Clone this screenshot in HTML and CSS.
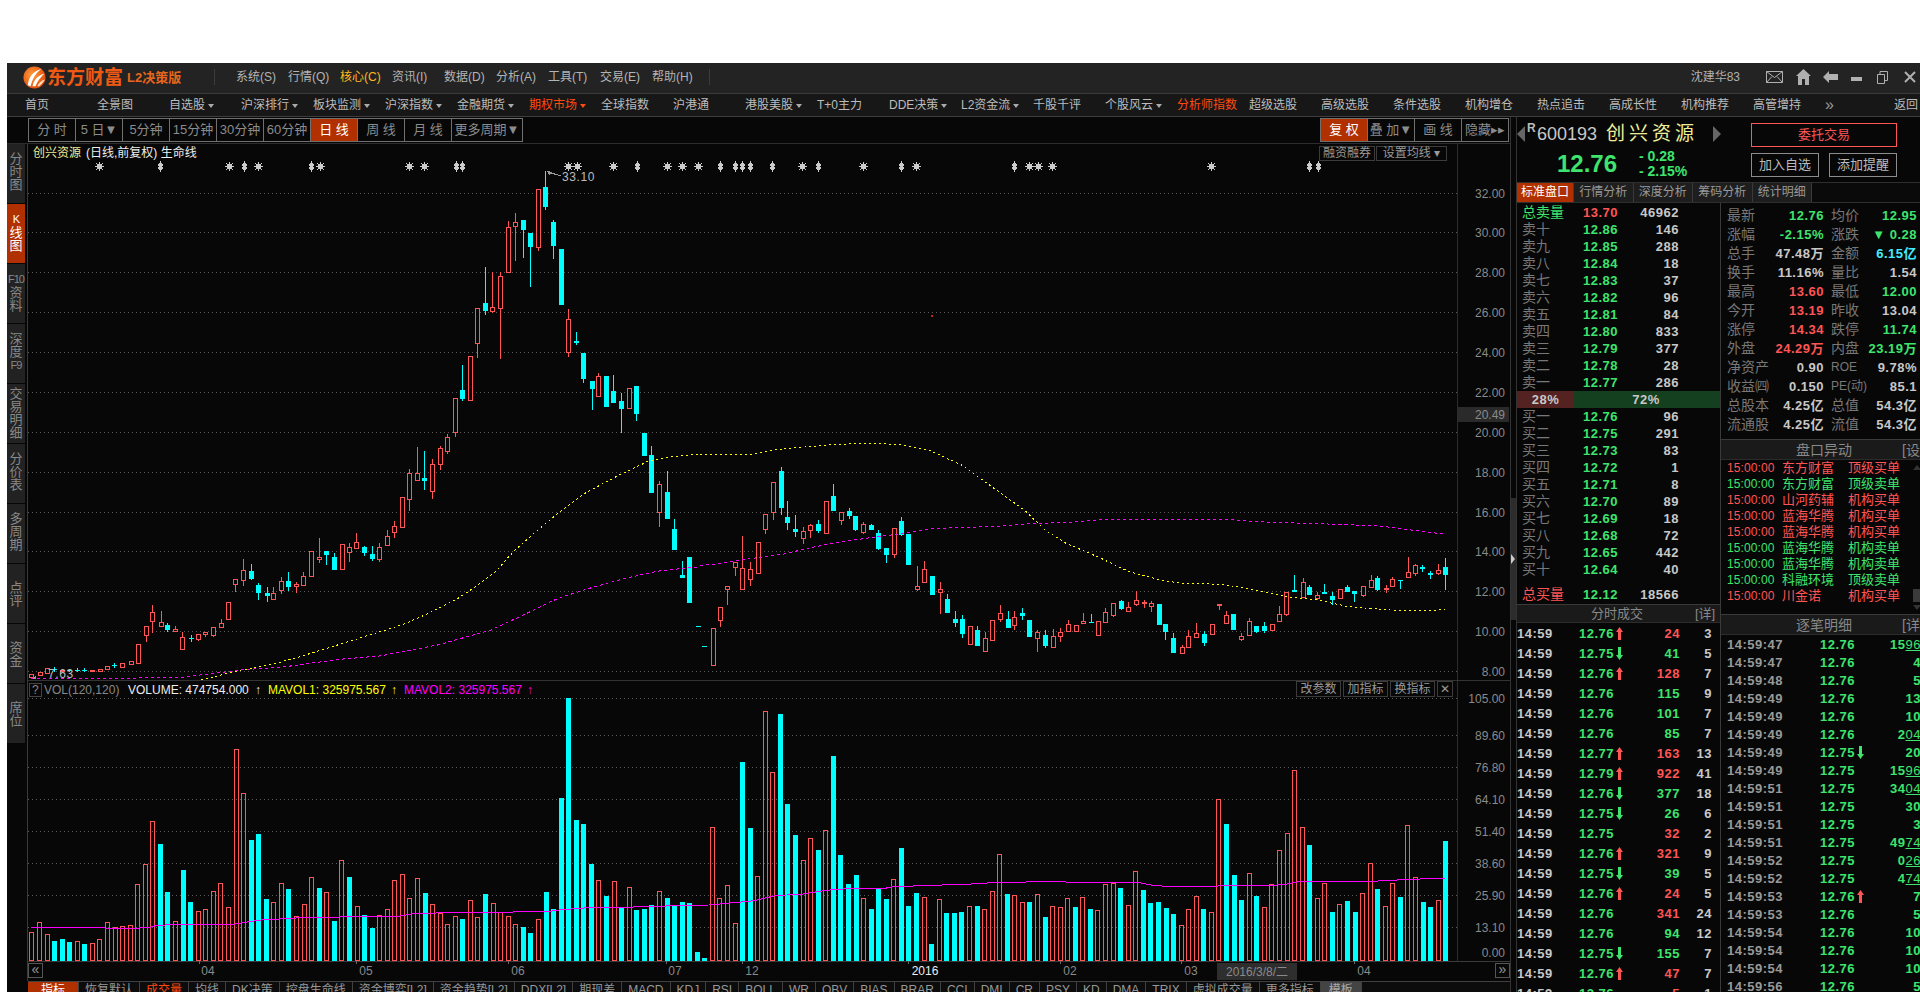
FILE: index.html
```html
<!DOCTYPE html>
<html lang="zh-CN">
<head>
<meta charset="utf-8">
<title>东方财富 L2决策版</title>
<link rel="stylesheet" href="styles.css">
</head>
<body>
<svg class="defs" aria-hidden="true">
  <symbol id="aup" viewBox="0 0 7 13"><path d="M3.5 0L7 5H5V13H2V5H0Z"/></symbol>
  <symbol id="adn" viewBox="0 0 7 13"><path d="M3.5 13L7 8H5V0H2V8H0Z"/></symbol>
</svg>
<div class="window">
  <header class="titlebar">
    <div class="logo">
      <svg class="logo-mark" viewBox="0 0 24 24">
        <defs><radialGradient id="lg" cx="40%" cy="40%" r="65%"><stop offset="0" stop-color="#ffa040"/><stop offset="1" stop-color="#e04a08"/></radialGradient></defs>
        <circle cx="12" cy="12" r="11.5" fill="url(#lg)"/>
        <path d="M5 20C6 11 11 5 19 3C14 7 10 12 8 21Z" fill="#fff"/>
        <path d="M10 21C11 15 15 10 22 8C18 12 15 16 13 21Z" fill="#fff"/>
        <path d="M15 21C16 18 19 15 23 14C21 17 19 19 17 21Z" fill="#ffe0c0"/>
      </svg>
      <span class="logo-name">东方财富</span>
      <span class="logo-ver">L2决策版</span>
    </div>
    <nav class="sysmenu">
      <span>系统(S)</span><span>行情(Q)</span><span class="hot">核心(C)</span><span>资讯(I)</span><span>数据(D)</span><span>分析(A)</span><span>工具(T)</span><span>交易(E)</span><span>帮助(H)</span>
    </nav>
    <div class="winctl">
      <span class="user">沈建华83</span>
      <svg class="wi wi-mail" viewBox="0 0 17 12"><path d="M.5.5H16.5V11.5H.5ZM.5.5L8.5 6.5L16.5.5M.5 11.5L6 5.5M16.5 11.5L11 5.5"/></svg>
      <svg class="wi wi-home" viewBox="0 0 15 16"><path class="f" d="M7.5 0L15 7H13V16H9V10H6V16H2V7H0Z"/></svg>
      <svg class="wi wi-back" viewBox="0 0 15 12"><path class="f" d="M0 6L6 0V3H15V9H6V12Z"/></svg>
      <svg class="wi wi-min" viewBox="0 0 11 4"><path class="f" d="M0 0H11V4H0Z"/></svg>
      <svg class="wi wi-max" viewBox="0 0 11 13"><path d="M.5 3.5H7.5V12.5H.5ZM3 3V.5H10.5V9.5H8"/></svg>
      <svg class="wi wi-close" viewBox="0 0 12 12"><path class="thick" d="M1 1L11 11M11 1L1 11"/></svg>
    </div>
  </header>
  <nav class="mainmenu">
    <span>首页</span><span>全景图</span><span class="dd">自选股</span><span class="dd">沪深排行</span><span class="dd">板块监测</span><span class="dd">沪深指数</span><span class="dd">金融期货</span><span class="dd hot">期权市场</span><span>全球指数</span><span>沪港通</span><span class="dd">港股美股</span><span>T+0主力</span><span class="dd">DDE决策</span><span class="dd">L2资金流</span><span>千股千评</span><span class="dd">个股风云</span><span class="hot">分析师指数</span><span>超级选股</span><span>高级选股</span><span>条件选股</span><span>机构增仓</span><span>热点追击</span><span>高成长性</span><span>机构推荐</span><span>高管增持</span><span class="more">»</span><span class="back">返回</span>
  </nav>
  <div class="main">
    <section class="chartpane">
      <div class="toolbar">
        <div class="btngroup">
          <span>分 时</span><span>5 日▼</span><span>5分钟</span><span>15分钟</span><span>30分钟</span><span>60分钟</span><span class="on">日 线</span><span>周 线</span><span>月 线</span><span class="wide">更多周期▼</span>
        </div>
        <div class="btngroup">
          <span class="on">复 权</span><span>叠 加▼</span><span>画 线</span><span>隐藏▸▸</span>
        </div>
      </div>
      <div class="chartbody">
        <aside class="rail">
          <span>分<br>时<br>图</span><span class="on"><small>K</small><br>线<br>图</span><span><small>F10</small><br>资<br>料</span><span>深<br>度<br><small>F9</small></span><span class="four">交<br>易<br>明<br>细</span><span>分<br>价<br>表</span><span>多<br>周<br>期</span><span class="two">点<br>评</span><span class="two">资<br>金</span><span class="two">席<br>位</span>
        </aside>
        <div class="chart">
          <svg id="chart" class="chart-svg" viewBox="27 144 1483 837"></svg>
          <div class="chart-btns top">
            <span>融资融券</span><span class="ma">设置均线 ▾</span>
          </div>
          <div class="chart-btns ind">
            <span>改参数</span><span>加指标</span><span>换指标</span><span class="x">✕</span>
          </div>
          <span class="pager prev">«</span>
          <span class="pager next">»</span>
        </div>
      </div>
      <div class="bottomtabs">
        <span class="on">指标</span><span>恢复默认</span><span class="hot">成交量</span><span>均线</span><span>DK决策</span><span>控盘生命线</span><span>资金博弈[L2]</span><span>资金趋势[L2]</span><span>DDX[L2]</span><span>期现差</span><span>MACD</span><span>KDJ</span><span>RSI</span><span>BOLL</span><span>WR</span><span>OBV</span><span>BIAS</span><span>BRAR</span><span>CCI</span><span>DMI</span><span>CR</span><span>PSY</span><span>KD</span><span>DMA</span><span>TRIX</span><span>虚拟成交量</span><span>更多指标</span><span class="tpl">模板</span>
      </div>
    </section>
    <div class="splitter"><div class="grip"></div></div>
    <section class="quote">
      <div class="qhead">
        <div class="qleft">
          <div class="qname">
            <i class="tri tri-l"></i><sup>R</sup><span class="code">600193</span><span class="name">创兴资源</span><i class="tri tri-r"></i>
          </div>
          <div class="qprice">
            <span class="last">12.76</span>
            <div class="chg"><span>- 0.28</span><span>- 2.15%</span></div>
          </div>
        </div>
        <div class="qbtns">
          <span class="trade">委托交易</span>
          <div class="pair"><span>加入自选</span><span>添加提醒</span></div>
        </div>
      </div>
      <div class="qtabs"><span class="on">标准盘口</span><span>行情分析</span><span>深度分析</span><span>筹码分析</span><span>统计明细</span></div>
      <div class="qbody">
        <div class="col1">
          <div class="book">
            <div class="lv"><span class="g">总卖量</span><b class="r">13.70</b><b>46962</b></div>
            <div class="lv"><span>卖十</span><b class="g">12.86</b><b>146</b></div>
            <div class="lv"><span>卖九</span><b class="g">12.85</b><b>288</b></div>
            <div class="lv"><span>卖八</span><b class="g">12.84</b><b>18</b></div>
            <div class="lv"><span>卖七</span><b class="g">12.83</b><b>37</b></div>
            <div class="lv"><span>卖六</span><b class="g">12.82</b><b>96</b></div>
            <div class="lv"><span>卖五</span><b class="g">12.81</b><b>84</b></div>
            <div class="lv"><span>卖四</span><b class="g">12.80</b><b>833</b></div>
            <div class="lv"><span>卖三</span><b class="g">12.79</b><b>377</b></div>
            <div class="lv"><span>卖二</span><b class="g">12.78</b><b>28</b></div>
            <div class="lv"><span>卖一</span><b class="g">12.77</b><b>286</b></div>
            <div class="ratio"><b class="ra">28%</b><b class="rb">72%</b></div>
            <div class="lv"><span>买一</span><b class="g">12.76</b><b>96</b></div>
            <div class="lv"><span>买二</span><b class="g">12.75</b><b>291</b></div>
            <div class="lv"><span>买三</span><b class="g">12.73</b><b>83</b></div>
            <div class="lv"><span>买四</span><b class="g">12.72</b><b>1</b></div>
            <div class="lv"><span>买五</span><b class="g">12.71</b><b>8</b></div>
            <div class="lv"><span>买六</span><b class="g">12.70</b><b>89</b></div>
            <div class="lv"><span>买七</span><b class="g">12.69</b><b>18</b></div>
            <div class="lv"><span>买八</span><b class="g">12.68</b><b>72</b></div>
            <div class="lv"><span>买九</span><b class="g">12.65</b><b>442</b></div>
            <div class="lv"><span>买十</span><b class="g">12.64</b><b>40</b></div>
            <div class="lv total"><span class="r">总买量</span><b class="g">12.12</b><b>18566</b></div>
          </div>
          <div class="phead"><span>分时成交</span><em>[详]</em></div>
          <div class="trades">
            <div class="tr"><b>14:59</b><b class="g">12.76<svg class="ar r"><use href="#aup"/></svg></b><b class="r">24</b><b>3</b></div>
            <div class="tr"><b>14:59</b><b class="g">12.75<svg class="ar g"><use href="#adn"/></svg></b><b class="g">41</b><b>5</b></div>
            <div class="tr"><b>14:59</b><b class="g">12.76<svg class="ar r"><use href="#aup"/></svg></b><b class="r">128</b><b>7</b></div>
            <div class="tr"><b>14:59</b><b class="g">12.76</b><b class="g">115</b><b>9</b></div>
            <div class="tr"><b>14:59</b><b class="g">12.76</b><b class="g">101</b><b>7</b></div>
            <div class="tr"><b>14:59</b><b class="g">12.76</b><b class="g">85</b><b>7</b></div>
            <div class="tr"><b>14:59</b><b class="g">12.77<svg class="ar r"><use href="#aup"/></svg></b><b class="r">163</b><b>13</b></div>
            <div class="tr"><b>14:59</b><b class="g">12.79<svg class="ar r"><use href="#aup"/></svg></b><b class="r">922</b><b>41</b></div>
            <div class="tr"><b>14:59</b><b class="g">12.76<svg class="ar g"><use href="#adn"/></svg></b><b class="g">377</b><b>18</b></div>
            <div class="tr"><b>14:59</b><b class="g">12.75<svg class="ar g"><use href="#adn"/></svg></b><b class="g">26</b><b>6</b></div>
            <div class="tr"><b>14:59</b><b class="g">12.75</b><b class="r">32</b><b>2</b></div>
            <div class="tr"><b>14:59</b><b class="g">12.76<svg class="ar r"><use href="#aup"/></svg></b><b class="r">321</b><b>9</b></div>
            <div class="tr"><b>14:59</b><b class="g">12.75<svg class="ar g"><use href="#adn"/></svg></b><b class="g">39</b><b>5</b></div>
            <div class="tr"><b>14:59</b><b class="g">12.76<svg class="ar r"><use href="#aup"/></svg></b><b class="r">24</b><b>5</b></div>
            <div class="tr"><b>14:59</b><b class="g">12.76</b><b class="r">341</b><b>24</b></div>
            <div class="tr"><b>14:59</b><b class="g">12.76</b><b class="g">94</b><b>12</b></div>
            <div class="tr"><b>14:59</b><b class="g">12.75<svg class="ar g"><use href="#adn"/></svg></b><b class="g">155</b><b>7</b></div>
            <div class="tr"><b>14:59</b><b class="g">12.76<svg class="ar r"><use href="#aup"/></svg></b><b class="r">47</b><b>7</b></div>
            <div class="tr"><b>14:59</b><b class="g">12.76</b><b class="r">5</b><b>1</b></div>
          </div>
        </div>
        <div class="col2">
          <div class="info">
            <div class="in"><span>最新</span><b class="g">12.76</b><span>均价</span><b class="g">12.95</b></div>
            <div class="in"><span>涨幅</span><b class="g">-2.15%</b><span>涨跌</span><b class="g">▼ 0.28</b></div>
            <div class="in"><span>总手</span><b>47.48万</b><span>金额</span><b class="c">6.15亿</b></div>
            <div class="in"><span>换手</span><b>11.16%</b><span>量比</span><b>1.54</b></div>
            <div class="in"><span>最高</span><b class="r">13.60</b><span>最低</span><b class="g">12.00</b></div>
            <div class="in"><span>今开</span><b class="r">13.19</b><span>昨收</span><b>13.04</b></div>
            <div class="in"><span>涨停</span><b class="r">14.34</b><span>跌停</span><b class="g">11.74</b></div>
            <div class="in"><span>外盘</span><b class="r">24.29万</b><span>内盘</span><b class="g">23.19万</b></div>
            <div class="in"><span>净资产</span><b>0.90</b><span class="sm">ROE</span><b>9.78%</b></div>
            <div class="in"><span>收益㈣</span><b>0.150</b><span class="sm">PE(动)</span><b>85.1</b></div>
            <div class="in"><span>总股本</span><b>4.25亿</b><span>总值</span><b>54.3亿</b></div>
            <div class="in"><span>流通股</span><b>4.25亿</b><span>流值</span><b>54.3亿</b></div>
          </div>
          <div class="phead wide"><span>盘口异动</span><em>[设</em></div>
          <div class="alerts">
            <div class="al r"><span>15:00:00</span><span>东方财富</span><span>顶级买单</span></div>
            <div class="al g"><span>15:00:00</span><span>东方财富</span><span>顶级卖单</span></div>
            <div class="al r"><span>15:00:00</span><span>山河药辅</span><span>机构买单</span></div>
            <div class="al r"><span>15:00:00</span><span>蓝海华腾</span><span>机构买单</span></div>
            <div class="al r"><span>15:00:00</span><span>蓝海华腾</span><span>机构买单</span></div>
            <div class="al g"><span>15:00:00</span><span>蓝海华腾</span><span>机构卖单</span></div>
            <div class="al g"><span>15:00:00</span><span>蓝海华腾</span><span>机构卖单</span></div>
            <div class="al g"><span>15:00:00</span><span>科融环境</span><span>顶级卖单</span></div>
            <div class="al r"><span>15:00:00</span><span>川金诺</span><span>机构买单</span></div>
            <div class="scroll"><i class="up"></i><i class="thumb"></i><i class="down"></i></div>
          </div>
          <div class="phead wide"><span>逐笔明细</span><em>[详</em></div>
          <div class="ticks">
            <div class="tk"><b>14:59:47</b><b class="g">12.76</b><b class="g">15<u>96</u></b></div>
            <div class="tk"><b>14:59:47</b><b class="g">12.76</b><b class="g">4</b></div>
            <div class="tk"><b>14:59:48</b><b class="g">12.76</b><b class="g">5</b></div>
            <div class="tk"><b>14:59:49</b><b class="g">12.76</b><b class="g">13</b></div>
            <div class="tk"><b>14:59:49</b><b class="g">12.76</b><b class="g">10</b></div>
            <div class="tk"><b>14:59:49</b><b class="g">12.76</b><b class="g">2<u>04</u></b></div>
            <div class="tk"><b>14:59:49</b><b class="g">12.75<svg class="ar g"><use href="#adn"/></svg></b><b class="g">20</b></div>
            <div class="tk"><b>14:59:49</b><b class="g">12.75</b><b class="g">15<u>96</u></b></div>
            <div class="tk"><b>14:59:51</b><b class="g">12.75</b><b class="g">34<u>04</u></b></div>
            <div class="tk"><b>14:59:51</b><b class="g">12.75</b><b class="g">30</b></div>
            <div class="tk"><b>14:59:51</b><b class="g">12.75</b><b class="g">3</b></div>
            <div class="tk"><b>14:59:51</b><b class="g">12.75</b><b class="g">49<u>74</u></b></div>
            <div class="tk"><b>14:59:52</b><b class="g">12.75</b><b class="g">0<u>26</u></b></div>
            <div class="tk"><b>14:59:52</b><b class="g">12.75</b><b class="g">4<u>74</u></b></div>
            <div class="tk"><b>14:59:53</b><b class="g">12.76<svg class="ar r"><use href="#aup"/></svg></b><b class="g">7</b></div>
            <div class="tk"><b>14:59:53</b><b class="g">12.76</b><b class="g">5</b></div>
            <div class="tk"><b>14:59:54</b><b class="g">12.76</b><b class="g">10</b></div>
            <div class="tk"><b>14:59:54</b><b class="g">12.76</b><b class="g">10</b></div>
            <div class="tk"><b>14:59:54</b><b class="g">12.76</b><b class="g">10</b></div>
            <div class="tk"><b>14:59:56</b><b class="g">12.76</b><b class="g">5</b></div>
          </div>
        </div>
      </div>
    </section>
  </div>
</div>
<script src="chart.js"></script>
</body>
</html>
```
FILE: styles.css
```css
* { box-sizing: border-box; }
html, body { margin: 0; height: 100%; background: #fff; overflow: hidden; }
body { padding: 63px 0 0 7px; font: 12px/1 "Liberation Sans", "Noto Sans CJK SC", sans-serif; color: #aaa; }
.defs { width: 0; height: 0; position: absolute; }
b { font-weight: 700; }
em { font-style: normal; }

.window { width: 1913px; height: 929px; background: #070707; overflow: hidden; display: flex; flex-direction: column; }

.titlebar { flex: none; height: 31px; background: #232323; border-bottom: 1px solid #3a3a3a; display: flex; align-items: center; padding: 0 4px 2px 16px; }
.logo { display: flex; align-items: center; width: 192px; border-right: 1px solid #3c3c3c; height: 16px; }
.logo-mark { width: 23px; height: 23px; flex: none; }
.logo-name { font-size: 19px; font-weight: 700; color: #ee5a14; margin-left: 1px; width: 80px; white-space: nowrap; }
.logo-ver { font-size: 13px; font-weight: 700; color: #e8661c; white-space: nowrap; }
.sysmenu { display: flex; padding-left: 21px; width: 495px; height: 16px; align-items: center; border-right: 1px solid #3c3c3c; }
.sysmenu span { width: 52px; flex: none; color: #b4b4b4; white-space: nowrap; font-size: 12px; }
.sysmenu .hot { color: #ffb81e; }
.winctl { margin-left: auto; display: flex; align-items: center; }
.user { color: #b0b0b0; margin-right: 26px; white-space: nowrap; }
.wi { fill: none; stroke: #b0b0b0; stroke-width: 1; display: block; }
.wi .f { fill: #b0b0b0; stroke: none; }
.wi .thick { stroke-width: 2; }
.wi-mail { width: 17px; height: 12px; margin-right: 13px; }
.wi-home { width: 15px; height: 16px; margin-right: 12px; }
.wi-back { width: 15px; height: 12px; margin-right: 13px; }
.wi-min { width: 11px; height: 4px; margin-right: 15px; margin-top: 3px; }
.wi-max { width: 11px; height: 13px; margin-right: 16px; }
.wi-close { width: 12px; height: 12px; }

.mainmenu { flex: none; height: 23px; background: #171717; border-bottom: 1px solid #3e3e3e; display: flex; align-items: center; padding-left: 18px; }
.mainmenu span { flex: none; width: 72px; color: #bcbcbc; white-space: nowrap; }
.mainmenu .hot { color: #ff4a10; }
.mainmenu .dd::after { content: ""; display: inline-block; border: 3px solid transparent; border-top: 4px solid #aaa; margin-left: 3px; vertical-align: -2px; }
.mainmenu .hot.dd::after { border-top-color: #ff4a10; }
.mainmenu .more { font-size: 16px; width: 69px; color: #999; }
.mainmenu .back { width: 28px; }

.main { flex: 1; min-height: 0; display: flex; }

.chartpane { flex: none; width: 1503px; display: flex; flex-direction: column; }
.toolbar { flex: none; height: 27px; border-bottom: 1px solid #2c2c2c; display: flex; justify-content: space-between; padding: 1px 1px 0 21px; }
.btngroup { display: flex; height: 24px; border: 1px solid #707070; border-right: 0; }
.btngroup span { width: 47px; flex: none; border-right: 1px solid #707070; color: #8c8c8c; font-size: 13px; line-height: 22px; text-align: center; white-space: nowrap; }
.btngroup .wide { width: 71px; }
.btngroup .on { background: #b03000; color: #fff; }

.chartbody { flex: none; height: 837px; display: flex; }
.rail { flex: none; width: 20px; display: flex; flex-direction: column; gap: 1px; }
.rail span { flex: none; width: 18px; height: 59px; background: #222; color: #888; font-size: 13px; line-height: 13px; text-align: center; padding-top: 8px; white-space: nowrap; }
.rail small { font-size: 11px; letter-spacing: -1px; display: inline-block; max-width: 18px; }
.rail .four { padding-top: 3px; }
.rail .two { padding-top: 17px; }
.rail .on { background: #b03000; color: #fff; }
.chart { flex: none; width: 1483px; height: 837px; position: relative; overflow: hidden; }
.chart-svg { display: block; width: 1483px; height: 837px; shape-rendering: crispEdges; }
.chart-svg text { font: 12px "Liberation Sans", "Noto Sans CJK SC", sans-serif; dominant-baseline: central; shape-rendering: auto; }
.chart-svg .lab { fill: #8a8a8a; text-anchor: end; }
.chart-svg .mon { fill: #8a8a8a; text-anchor: middle; }
.chart-svg .mon.y { fill: #eee; }
.chart-svg .wh { fill: #eee; }
.chart-svg .ye { fill: #ffff00; }
.chart-svg .ma { fill: #ff00ff; }
.chart-svg .gy { fill: #888; }
.chart-svg .ttl { fill: #eeee99; }
.chart-svg .pk { fill: #bbb; letter-spacing: .6px; }

.chart-btns { position: absolute; display: flex; gap: 2px; }
.chart-btns span { border: 1px solid #3c3c3c; color: #999; white-space: nowrap; text-align: center; }
.chart-btns.top { left: 1292px; top: 2px; gap: 1px; }
.chart-btns.top span { width: 56px; height: 15px; line-height: 13px; }
.chart-btns.top .ma { width: 71px; }
.chart-btns.ind { left: 1269px; top: 537px; }
.chart-btns.ind span { width: 45px; height: 16px; line-height: 14px; }
.chart-btns.ind .x { width: 16px; }
.pager { position: absolute; width: 15px; height: 15px; border: 1px solid #555; color: #999; text-align: center; font-size: 14px; line-height: 11px; background: #070707; }
.pager.prev { left: 1px; top: 819px; }
.pager.next { left: 1468px; top: 819px; }

.bottomtabs { flex: none; display: flex; margin-left: 21px; width: 1482px; border-top: 1px solid #404040; height: 20px; background: #0c0c0c; }
.bottomtabs span { flex: none; padding: 1px 6px 0; border-right: 1px solid #404040; color: #999; line-height: 14px; white-space: nowrap; }
.bottomtabs .on { background: #b03000; color: #fff; padding: 1px 13px 0; }
.bottomtabs .hot { color: #ff4a10; }
.bottomtabs .tpl { background: #444; padding: 1px 8px 0; color: #aaa; }

.splitter { flex: none; width: 7px; border-left: 1px solid #333; border-right: 1px solid #333; }
.grip { margin-top: 381px; height: 122px; background: #2c2c2c; display: flex; align-items: center; }
.grip::after { content: ""; border: 5px solid transparent; border-left: 4px solid #ccc; }

.quote { flex: none; width: 403px; display: flex; flex-direction: column; min-height: 0; }
.qhead { flex: none; height: 66px; display: flex; border-bottom: 1px solid #2e2e2e; }
.qleft { width: 234px; flex: none; }
.qname { display: flex; align-items: center; height: 32px; padding-top: 1px; }
.tri { display: block; border: 8px solid transparent; }
.tri-l { border-right: 8px solid #666; border-left: 0; }
.tri-r { border-left: 8px solid #666; border-right: 0; margin-left: 16px; }
.qname sup { font-size: 12px; font-weight: 700; color: #bbb; margin: -12px 1px 0 2px; width: 9px; }
.code { font-size: 18px; color: #c8c8c8; width: 69px; }
.name { font-size: 19px; color: #eeee99; letter-spacing: 4px; white-space: nowrap; width: 91px; }
.qprice { display: flex; align-items: center; padding-left: 40px; }
.last { font-size: 24px; font-weight: 700; color: #3ee46e; width: 82px; }
.chg { display: flex; flex-direction: column; font-size: 14px; font-weight: 700; color: #3ee46e; line-height: 15px; }
.qbtns { padding-top: 6px; width: 146px; }
.qbtns span { display: block; color: #bbb; border: 1px solid #8c8c8c; text-align: center; white-space: nowrap; font-size: 13px; }
.qbtns .trade { height: 24px; line-height: 22px; border-color: #ff5555; color: #ff5555; margin-bottom: 6px; }
.pair { display: flex; justify-content: space-between; }
.pair span { width: 68px; height: 24px; line-height: 22px; }

.qtabs { flex: none; height: 20px; display: flex; background: #0a0a0a; border-bottom: 1px solid #2e2e2e; }
.qtabs span { width: 59.5px; background: #1e1e1e; border-right: 1px solid #3a3a3a; color: #999; text-align: center; line-height: 18px; white-space: nowrap; }
.qtabs .on { width: 57px; background: #b03000; color: #fff; }

.qbody { flex: 1; min-height: 0; display: flex; }
.g { color: #3ee46e; fill: #3ee46e; }
.r { color: #ff5555; fill: #ff5555; }
.c { color: #44eeff; }
.col1 { flex: none; width: 204px; border-right: 1px solid #3a3a3a; }
.col2 { flex: none; width: 199px; }

.book { height: 401px; padding-top: 1px; display: flex; flex-direction: column; }
.lv { flex: none; height: 17px; display: grid; grid-template-columns: 61px 50px 46px; padding-left: 5px; align-items: center; white-space: nowrap; }
.lv span { font-size: 14px; color: #787878; line-height: 17px; }
.lv span.g { color: #3ee46e; }
.lv span.r { color: #ff5555; }
.lv b, .tr b, .tk b, .in b { font-size: 13px; letter-spacing: .5px; color: #c8c8c8; }
.lv b.g, .tr b.g, .tk b.g, .in b.g { color: #3ee46e; }
.lv b.r, .tr b.r, .in b.r { color: #ff5555; }
.in b.c { color: #44eeff; }
.lv b:last-child { text-align: right; }
.ratio { flex: none; height: 17px; display: flex; line-height: 17px; font-size: 13px; text-align: center; }
.ratio b { color: #c8c8c8; letter-spacing: .5px; }
.ra { width: 57px; background: #552222; }
.rb { flex: 1; background: #144020; padding-right: 2px; }
.total { margin-top: 8px; }

.phead { height: 19px; background: #1a1a1a; border-top: 1px solid #3a3a3a; border-bottom: 1px solid #2c2c2c; display: flex; align-items: center; color: #888; font-size: 13px; white-space: nowrap; padding-left: 74px; }
.phead span { width: 104px; flex: none; }
.phead em { flex: none; }
.phead.wide { height: 21px; padding-left: 75px; font-size: 14px; }
.phead.wide span { width: 106px; }

.trades { display: flex; flex-direction: column; }
.tr { flex: none; height: 20px; display: grid; grid-template-columns: 62px 48px 53px 32px; align-items: center; white-space: nowrap; }
.tr b:nth-child(3), .tr b:nth-child(4) { text-align: right; }
.ar { width: 7px; height: 13px; vertical-align: -2px; margin-left: 2px; }

.info { height: 236px; padding-top: 3px; }
.in { height: 19px; display: grid; grid-template-columns: 40px 57px 36px 57px; column-gap: 0; padding-left: 6px; align-items: center; white-space: nowrap; }
.in span { font-size: 14px; color: #787878; line-height: 19px; }
.in span:nth-child(3) { margin-left: 7px; }
.in span.sm { font-size: 12px; }
.in b { text-align: right; }
.in b:last-child { margin-left: -7px; width: 64px; }

.alerts { height: 154px; position: relative; }
.al { height: 16px; display: grid; grid-template-columns: 55px 66px auto; padding-left: 6px; align-items: center; white-space: nowrap; color: inherit; }
.al span:first-child { font-size: 12px; letter-spacing: .1px; }
.al span { font-size: 13px; line-height: 16px; }
.al.r { color: #ff5555; }
.al.g { color: #3ee46e; }
.scroll { position: absolute; right: 0; top: 0; bottom: 0; width: 7px; display: flex; flex-direction: column; align-items: center; }
.scroll .up { border: 4px solid transparent; border-bottom: 5px solid #333; margin-top: 1px; }
.scroll .thumb { width: 7px; height: 13px; margin-top: auto; background: #3a3a3a; }
.scroll .down { border: 4px solid transparent; border-top: 5px solid #333; margin-top: 3px; }

.ticks { display: flex; flex-direction: column; }
.tk { flex: none; height: 18px; display: grid; grid-template-columns: 93px 60px 41px; padding-left: 6px; align-items: center; white-space: nowrap; }
.tk b:first-child { color: #999; }
.tk b:last-child { text-align: right; }
.tk u { font-weight: 400; }
```
FILE: chart.js
```javascript
(function () {
  var svg = document.getElementById('chart');
  var R = '#ff5555', C = '#00ffff';
  var o = [];

  function z7(x, y) { return [x / 2.45, 660 + y / 3]; }
  function z10(x, y) { return [x / 2.24, 250 + y / 3]; }
  function z11(x, y) { return [700 + x / 1.912, 400 + y / 3]; }
  function z12(x, y) { return [440 + x / 3, 165 + y / 3]; }

  function line(x1, y1, x2, y2, c, extra) {
    o.push('<line x1="' + x1 + '" y1="' + y1 + '" x2="' + x2 + '" y2="' + y2 + '" stroke="' + c + '"' + (extra || '') + '/>');
  }
  function text(cls, x, y, s) {
    o.push('<text class="' + cls + '" x="' + x + '" y="' + y + '">' + s + '</text>');
  }
  function px(x, y, w, h, c) {
    return '<rect x="' + x + '" y="' + y + '" width="' + w + '" height="' + h + '" fill="' + c + '"/>';
  }

  /* frame */
  line(27.5, 144, 27.5, 981, '#3a3a3a');
  line(1457.5, 144, 1457.5, 962, '#2c2c2c');
  line(28, 680.5, 1510, 680.5, '#333');
  line(28, 961.5, 1510, 961.5, '#3a3a3a');

  /* grid */
  var dots = ' stroke-dasharray="1 3"';
  [[193, '32.00'], [232, '30.00'], [272, '28.00'], [312, '26.00'], [352, '24.00'], [392, '22.00'], [432, '20.00'], [472, '18.00'], [512, '16.00'], [551, '14.00'], [591, '12.00'], [631, '10.00'], [671, '8.00']].forEach(function (p) {
    line(28, p[0] + 0.5, 1460, p[0] + 0.5, '#5a5a5a', dots);
    text('lab', 1505, p[0] + 0.5, p[1]);
  });
  [[698, '105.00'], [735, '89.60'], [767, '76.80'], [799, '64.10'], [831, '51.40'], [863, '38.60'], [895, '25.90'], [927, '13.10']].forEach(function (p) {
    line(28, p[0] + 0.5, 1460, p[0] + 0.5, '#5a5a5a', dots);
    text('lab', 1505, p[0] + 0.5, p[1]);
  });
  text('lab', 1505, 953, '0.00');
  o.push(px(1458, 407, 51, 15, '#2a2a2a'));
  text('lab', 1505, 414.5, '20.49');

  /* header */
  text('ttl', 33, 153, '创兴资源');
  text('wh', 86, 153, '(日线,前复权) 生命线');

  /* signal marks */
  var stars = [99, 229, 258, 320, 409, 424, 568, 577, 613, 667, 682, 698, 802, 863, 916, 1029, 1038, 1052, 1211];
  var diamonds = [160, 244, 311, 456, 462, 637, 720, 735, 742, 750, 772, 818, 901, 1014, 1309, 1318];
  stars.forEach(function (x) {
    o.push(px(x - 2, 164, 5, 5, '#ccc'));
    o.push(px(x, 162, 1, 9, '#ccc'));
    o.push(px(x - 4, 166, 9, 1, '#ccc'));
    o.push(px(x - 3, 163, 1, 1, '#ccc'));
    o.push(px(x + 3, 163, 1, 1, '#ccc'));
    o.push(px(x - 3, 169, 1, 1, '#ccc'));
    o.push(px(x + 3, 169, 1, 1, '#ccc'));
  });
  diamonds.forEach(function (x) {
    o.push(px(x, 161, 1, 11, '#ccc'));
    o.push(px(x - 1, 163, 3, 7, '#ccc'));
    o.push(px(x - 2, 164, 5, 2, '#ccc'));
    o.push(px(x - 2, 167, 5, 2, '#ccc'));
  });

  /* moving averages */
  function poly(pts, fn, c, dash) {
    var d = pts.map(function (p) { return fn(p[0], p[1]).join(','); }).join(' ');
    return '<polyline points="' + d + '" fill="none" stroke="' + c + '" stroke-dasharray="' + dash + '"/>';
  }
  var yellowA = [[450, 1290], [540, 1260], [600, 1246], [660, 1225], [720, 1200], [780, 1175], [840, 1150], [900, 1125], [960, 1090], [1020, 1050], [1060, 1015], [1110, 965], [1150, 905], [1200, 845], [1250, 790], [1310, 730], [1380, 680], [1450, 635], [1500, 620], [1568, 613]];
  var yellowB = [[0, 165], [100, 163], [150, 148], [200, 141], [260, 133], [320, 130], [380, 133], [440, 152], [500, 195], [540, 240], [580, 285], [620, 330], [660, 390], [700, 430], [760, 470], [820, 515], [880, 540], [920, 550], [1000, 553], [1060, 570], [1120, 590], [1180, 600], [1240, 620], [1320, 630], [1400, 632], [1425, 628]];
  var magA = [[70, 1285], [230, 1285], [400, 1283], [540, 1260], [640, 1250], [760, 1228], [850, 1218], [980, 1185], [1060, 1155], [1100, 1140], [1180, 1090], [1250, 1045], [1320, 1015], [1400, 985], [1480, 962], [1568, 950]];
  var magB = [[0, 497], [40, 490], [100, 475], [160, 462], [220, 440], [280, 423], [340, 410], [400, 398], [440, 387], [500, 382], [560, 380], [640, 370], [700, 368], [760, 360], [820, 357], [1000, 358], [1080, 366], [1200, 372], [1300, 378], [1360, 390], [1425, 403]];

  /* candles */
  var P = 'R', Q = 'C';
  var candles = [];
  function add(fn, list) { list.forEach(function (c) { candles.push([fn, c]); }); }
  add(z7, [[77, P, 42, 50], [97, P, 36, 46], [114, P, 24, 38], [133, Q, 27, 28, 20, 36], [153, P, 29, 33], [170, Q, 30, 31, 26, 35], [189, Q, 30, 31, 25, 35], [207, Q, 29, 30, 24, 35], [226, P, 29, 33], [244, P, 28, 32], [263, P, 18, 27], [280, Q, 15, 16, 9, 24], [300, P, 10, 20], [320, P, 3, 13], [337, P, 0, 8]]);
  add(z10, [[308, P, 1183, 1238], [326, P, 1129, 1154, 0, 1176], [341, P, 1087, 1112, 1065, 1150], [360, P, 1115, 1127, 1083, 0], [375, Q, 1125, 1140, 1120, 1145], [393, P, 1137, 1143, 1128, 0], [408, P, 1162, 1196, 1145, 0], [427, Q, 1164, 1166, 1155, 1175], [444, P, 1153, 1166, 0, 1172], [460, P, 1147, 1152, 0, 1160], [478, P, 1130, 1154, 0, 1160], [494, P, 1120, 1130, 1107, 0], [511, P, 1057, 1108], [527, P, 988, 1003, 0, 1025], [545, P, 961, 991, 927, 1007], [563, Q, 964, 987, 942, 990], [579, Q, 1005, 1028, 1000, 1050], [597, Q, 1030, 1037, 1010, 1056], [612, P, 1030, 1046, 1010, 0], [630, P, 994, 1021, 981, 1032], [646, Q, 994, 1011, 966, 1023], [664, P, 1003, 1009, 995, 1028], [679, P, 979, 1004, 966, 0], [697, P, 904, 977], [715, P, 921, 926, 864, 938], [731, Q, 903, 915, 0, 945], [749, Q, 921, 960, 908, 0], [765, P, 883, 956], [782, P, 892, 905, 880, 935], [798, P, 877, 893, 850, 897], [816, Q, 892, 909, 888, 917], [834, Q, 912, 927, 888, 933], [850, P, 892, 926, 880, 935], [867, P, 859, 884, 840, 0], [883, P, 829, 845, 813, 863], [901, P, 742, 830], [917, P, 670, 746, 657, 783], [935, P, 670, 689, 591, 0], [950, Q, 684, 693, 603, 720], [968, P, 643, 722, 628, 746], [986, P, 595, 641, 588, 660], [1002, P, 562, 602, 552, 611], [1020, P, 445, 545, 0, 560], [1036, Q, 420, 447, 345, 453], [1053, P, 319, 449], [1069, P, 175, 280, 0, 323], [1087, Q, 159, 183, 52, 195], [1103, P, 172, 183, 65, 189], [1121, P, 79, 173, 65, 327]]);
  add(z12, [[205, P, 187, 321, 168, 0], [226, P, 172, 183, 144, 288], [250, Q, 165, 195, 0, 278], [271, Q, 204, 246, 0, 365], [295, P, 72, 245, 0, 258], [316, Q, 66, 126, 18, 135], [340, Q, 171, 243, 165, 282], [364, Q, 252, 420]]);
  add(z10, [[1273, P, 208, 307, 178, 320], [1291, Q, 274, 278, 245, 285], [1307, Q, 309, 387, 0, 398], [1325, Q, 393, 417, 0, 480], [1340, P, 378, 437, 370, 0], [1358, Q, 378, 470], [1374, Q, 423, 458, 375, 0], [1392, Q, 453, 477, 430, 548], [1410, P, 414, 473], [1425, Q, 408, 491, 0, 513], [1443, Q, 549, 618], [1459, Q, 616, 729, 588, 0], [1477, P, 703, 785, 693, 830], [1493, Q, 726, 807, 663, 0], [1510, Q, 837, 900, 807, 0], [1528, Q, 975, 983, 933, 0], [1544, Q, 921, 1058], [1563, Q, 1129, 1130]]);
  add(z11, [[8, Q, 739, 740], [24, P, 685, 794], [38, P, 622, 660, 0, 680], [52, P, 557, 566, 0, 615], [66, P, 487, 500, 0, 528], [81, P, 505, 566, 408, 0], [96, P, 508, 536, 487, 558], [110, P, 427, 518, 0, 520], [125, P, 343, 388, 0, 402], [139, P, 247, 335, 0, 360], [154, Q, 213, 323, 202, 345], [167, Q, 351, 368, 303, 390], [182, Q, 387, 396, 346, 410], [196, P, 394, 415, 382, 432], [211, P, 376, 390, 372, 413], [226, Q, 372, 394, 360, 400], [240, P, 304, 398], [255, Q, 289, 332, 252, 0], [269, P, 337, 361, 0, 375], [284, Q, 334, 347, 325, 357], [297, Q, 348, 390, 0, 393], [312, P, 372, 397, 367, 401], [327, Q, 376, 390, 372, 0], [341, Q, 400, 446, 390, 449], [356, Q, 445, 464, 0, 488], [370, P, 385, 463, 0, 475], [385, Q, 364, 405, 351, 407], [398, Q, 401, 494], [414, P, 557, 568, 498, 573], [428, P, 508, 547, 484, 0], [443, Q, 528, 584], [458, P, 568, 575, 546, 641], [472, Q, 597, 638, 582, 0], [487, Q, 657, 668, 633, 680], [500, Q, 657, 701, 645, 714], [516, P, 679, 731], [529, Q, 691, 737, 677, 0], [544, P, 715, 754, 695, 0], [559, P, 659, 721], [573, P, 638, 656, 615, 665], [588, Q, 657, 683, 632, 685], [601, P, 652, 674, 633, 690], [616, Q, 640, 648, 625, 660], [630, Q, 660, 710], [645, P, 697, 715, 690, 755], [659, Q, 706, 737, 690, 745], [674, P, 709, 742, 688, 0], [689, P, 695, 707, 685, 725], [703, P, 673, 693, 660, 697], [718, P, 676, 692, 0, 697], [732, P, 664, 670, 640, 0], [747, Q, 667, 668, 642, 670], [761, P, 664, 705, 0, 707], [775, P, 637, 665, 625, 0], [789, P, 610, 644, 0, 650], [804, Q, 604, 627, 600, 630], [819, P, 622, 632, 607, 0], [833, P, 601, 611, 573, 617], [848, P, 606, 610, 600, 623], [862, P, 610, 617, 603, 636], [877, Q, 613, 674], [890, Q, 672, 697, 0, 720], [905, Q, 714, 758, 700, 0], [921, P, 741, 759, 735, 0], [934, P, 709, 740, 690, 0], [949, P, 699, 710, 670, 0], [963, Q, 702, 729, 693, 737], [978, P, 673, 703], [992, P, 613, 614, 613, 630], [1006, P, 646, 668, 632, 0], [1020, Q, 643, 689], [1035, P, 708, 717, 700, 722], [1050, P, 664, 705, 655, 708], [1064, Q, 678, 696, 0, 700], [1079, Q, 678, 694, 665, 698], [1093, P, 673, 690, 0, 693], [1108, P, 643, 662, 618, 665], [1121, P, 577, 641, 0, 648], [1136, Q, 571, 577, 525, 0], [1152, P, 545, 590, 535, 593], [1165, Q, 562, 585, 555, 0], [1180, P, 584, 594, 575, 600], [1194, Q, 576, 581, 552, 0], [1209, Q, 588, 600, 575, 614], [1223, P, 568, 593], [1238, Q, 562, 576, 555, 0], [1251, Q, 573, 581, 0, 605], [1267, P, 559, 584, 0, 590], [1282, P, 541, 561, 525, 565], [1295, Q, 535, 570, 528, 572], [1311, P, 565, 566, 555, 580], [1324, P, 538, 558, 532, 561], [1339, Q, 541, 542, 0, 567], [1353, P, 517, 530, 472, 0], [1368, P, 495, 518, 491, 527], [1381, Q, 500, 507, 494, 517], [1396, Q, 519, 524, 514, 536], [1412, P, 511, 520, 492, 524], [1425, Q, 502, 525, 474, 570]]);

  candles.forEach(function (e) {
    var fn = e[0], c = e[1];
    var p = fn(c[0], c[2]);
    var x = Math.round(p[0]);
    var top = Math.round(p[1]);
    var bot = Math.round(fn(c[0], c[3])[1]);
    var col = c[1] === P ? R : C;
    if (c[4]) line(x + 0.5, Math.round(fn(c[0], c[4])[1]), x + 0.5, top, col);
    if (c[5]) line(x + 0.5, bot, x + 0.5, Math.round(fn(c[0], c[5])[1]), col);
    if (c[1] === P) {
      o.push('<rect x="' + (x - 1.5) + '" y="' + (top + 0.5) + '" width="4" height="' + Math.max(1, bot - top) + '" fill="#070707" stroke="' + R + '"/>');
    } else {
      o.push(px(x - 2, top, 5, Math.max(1, bot - top), C));
    }
  });

  o.push(poly(yellowA, z10, '#ffff00', '2 3'));
  o.push(poly(yellowB, z11, '#ffff00', '2 3'));
  o.push(poly(magA, z10, '#ff00ff', '3 3'));
  o.push(poly(magB, z11, '#ff00ff', '3 3'));

  /* peak and low labels */
  line(548, 172, 561, 176, '#999');
  o.push('<path d="M547 171L552 172L549 175Z" fill="#999"/>');
  text('pk', 562, 177, '33.10');
  o.push('<path d="M32 679L36 675V679Z" fill="#999"/>');
  text('pk', 48, 674, '7.63');
  o.push(px(931, 315, 2, 2, '#c02020'));

  /* indicator legend */
  o.push('<rect x="29.5" y="683.5" width="12" height="13" fill="none" stroke="#444"/>');
  text('gy', 32, 690, '?');
  text('gy', 44, 689.5, 'VOL(120,120)');
  text('wh', 128, 689.5, 'VOLUME: 474754.000');
  text('wh', 255, 689.5, '↑');
  text('ye', 268, 689.5, 'MAVOL1: 325975.567');
  text('ye', 391, 689.5, '↑');
  text('ma', 404, 689.5, 'MAVOL2: 325975.567');
  text('ma', 527, 689.5, '↑');

  /* volume */
  var v = 'R817 R787 R823 C843 C837 C846 R844 C852 R850 R838 R787 R801 R799 R796 R673 R612 R484 C552 C696 R784 C630 C726 R754 R748 R694 R670 R742 R268 R400 C540 C522 C717 R727 R670 C687 R769 R733 R652 C684 R697 C783 R601 C651 R739 C765 C804 R766 R748 R661 R643 R715 R655 C699 R733 R758 R793 R769 C777 R721 R772 C702 R730 R757 R769 R793 C801 C819 R778 C696 C747 C414 C114 C480 C492 C612 R661 C708 R664 C742 R682 C750 ' +
    'C747 C735 R694 C714 C738 C726 C729 C876 C894 R502 R715 R676 R790 C306 C504 R649 R154 R337 C162 C432 C525 R601 R535 C570 R511 C288 C585 C672 C645 R715 C747 C683 C717 R658 C564 C738 C699 R712 C852 R718 C759 C759 C756 R739 C738 R748 R694 R583 C702 R706 R727 C726 R703 C771 R739 R742 R715 C741 R712 C747 R751 R673 R668 C684 R736 R634 C690 C729 C726 C744 C762 R796 R748 R709 C747 R757 R418 C492 C645 C720 R640 C708 R742 R673 R571 ' +
    'R520 R331 R502 C555 R715 R670 C756 R733 C723 C756 R700 R610 C687 R739 R670 C711 R496 R652 C726 C741 R721 C543';
  var bars = v.split(' ');
  var step = (1445.3 - 31.4) / (bars.length - 1);
  bars.forEach(function (b, i) {
    var x = Math.round(31.4 + i * step);
    var top = Math.round(660 + (+b.slice(1)) / 3);
    if (b[0] === 'R') {
      o.push('<rect x="' + (x - 1.5) + '" y="' + (top + 0.5) + '" width="4" height="' + (960 - top) + '" fill="none" stroke="' + R + '"/>');
    } else {
      o.push(px(x - 2, top, 5, 961 - top, C));
    }
  });

  var mv = [[31, 802], [74, 803], [135, 805], [150, 802], [157, 796], [184, 793], [233, 793], [245, 787], [261, 780], [286, 776], [306, 772], [339, 772], [340, 768], [400, 768], [416, 760], [482, 757], [547, 755], [559, 750], [575, 746], [588, 743], [624, 743], [637, 740], [709, 735], [738, 727], [754, 722], [775, 707], [803, 702], [820, 694], [836, 688], [860, 685], [885, 685], [893, 680], [934, 676], [971, 672], [999, 667], [1056, 665], [1089, 668], [1101, 667], [1138, 667], [1154, 677], [1179, 680], [1215, 680], [1219, 677], [1270, 677], [1287, 672], [1300, 664], [1373, 664], [1410, 658], [1445, 655]];
  var mp = mv.map(function (p) { return p[0] + ',' + (660 + p[1] / 3).toFixed(1); }).join(' ');
  o.push('<polyline points="' + mp + '" fill="none" stroke="#ff00ff"/>');

  /* time axis */
  [[199, 208, '04'], [356, 366, '05'], [508, 518, '06'], [666, 675, '07'], [742, 752, '12'], [908, 925, '2016'], [1060, 1070, '02'], [1181, 1191, '03'], [1354, 1364, '04']].forEach(function (t) {
    line(t[0] + 0.5, 961, t[0] + 0.5, 964, '#666');
    text(t[2] === '2016' ? 'mon y' : 'mon', t[1], 971, t[2]);
  });
  o.push(px(1217, 963, 80, 17, '#2e2e2e'));
  text('mon', 1257, 972, '2016/3/8/二');

  svg.innerHTML = o.join('');
})();
```
